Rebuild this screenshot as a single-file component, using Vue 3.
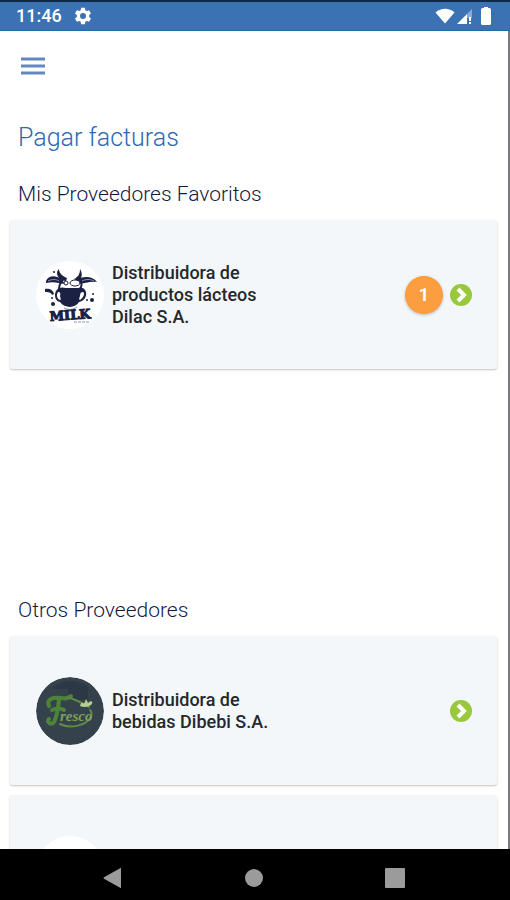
<template>
  <div class="screen">
    <header class="status-bar">
      <span class="clock">11:46</span>
      <svg class="status-gear" width="18" height="18" viewBox="0 0 24 24" aria-hidden="true">
        <path fill="#fff" fill-rule="evenodd" d="M9.500 1h5l.6 3.200 2 1.100 3-1.100 2.600 4.400-2.500 2.200v2.400l2.500 2.200-2.600 4.400-3-1.100-2 1.100-.6 3.200h-5l-.6-3.200-2-1.100-3 1.100-2.600-4.400 2.500-2.200v-2.400L1.300 8.600 3.900 4.200l3 1.100 2-1.100zM12 8a4 4 0 1 0 0 8 4 4 0 0 0 0-8z" />
      </svg>
      <div class="status-icons">
        <svg width="20" height="16" viewBox="0 0 20 16" aria-hidden="true">
          <path fill="#fff" d="M0.500 4.500C6-.5 14-.5 19.500 4.500L10 15.500z" />
        </svg>
        <svg width="16" height="16" viewBox="0 0 16 16" aria-hidden="true">
          <path fill="#fff" fill-opacity=".4" d="M15 1v9h-5v-4z" />
          <path fill="#fff" d="M0 16L10 6v10zM12 9h2v4h-2zM12 14h2v2h-2z" />
        </svg>
        <svg class="battery" width="10" height="18" viewBox="0 0 10 18" aria-hidden="true">
          <path fill="#fff" d="M3 0h4v1h1.500Q10 1 10 3v13.500Q10 18 8.500 18h-7Q0 18 0 16.500V3Q0 1 1.500 1H3z" />
        </svg>
      </div>
    </header>

    <main class="content">
      <button class="menu-btn" type="button" aria-label="Menú">
        <svg width="24" height="18" viewBox="0 0 24 18" aria-hidden="true">
          <path stroke="#6288bf" stroke-width="3" d="M0 2h24M0 9h24M0 16h24" />
        </svg>
      </button>

      <h1 class="title">Pagar facturas</h1>

      <section v-for="group in groups" :key="group.title" class="group">
        <h2 class="group-title">{{ group.title }}</h2>
        <div class="cards">
          <a v-for="p in group.providers" :key="p.id" class="card" href="#">
            <span class="avatar">
              <svg v-if="p.logo === 'milk'" width="68" height="68" viewBox="0 0 68 68" aria-hidden="true">
                <!-- horns and ears -->
                <g fill="#1b2142">
                  <path d="M23 8c0 4 3 7 8 9l-1 3c-5 0-9-4-9-8 0-2 1-3 2-4zM44 8c3 5 2 10-2 12l-4-2c4-2 6-5 6-10z" />
                  <path d="M10 20c2-6 10-6 15-2 2 2 3 4 4 5-6-1-12-3-19-1zM39 21c5-6 17-7 22 0-7-1-12 2-20 2z" />
                </g>
                <path d="M12 20c4-2 8-2 11 0M46 20c4-2 8-2 12 0" fill="none" stroke="#8d94aa" />
                <!-- face -->
                <path d="M27 19c-3 3-4 6-4 9M45 20c1 3 1 5-1 8" fill="none" stroke="#1b2142" stroke-width="2" />
                <ellipse cx="39" cy="22" rx="5" ry="3" fill="#fff" stroke="#1b2142" />
                <circle cx="30" cy="22" r="2" fill="#fff" stroke="#1b2142" />
                <!-- muzzle -->
                <path fill="#1b2142" d="M20 30c2-4 6-4 10-3h12c4-1 7 0 8 4 1 5-2 9-7 10-3 6-14 7-19 0-5-1-6-7-4-11z" />
                <path fill="#fff" d="M22 31c2 0 3 1 2 4 1 3 1 4 0 4-3-1-4-5-2-8zM47 31c2 1 1 5-3 8-1 0-1-2 0-4 0-3 1-4 3-4z" />
                <path d="M28 47c4 2 9 2 13-1" fill="none" stroke="#858ba1" />
                <!-- splashes -->
                <g fill="#1b2142">
                  <path d="M9 28c5-1 8 1 9 5l-2 1c-1-3-4-3-7-3z" />
                  <circle cx="18" cy="11" r="1" />
                  <circle cx="16" cy="37" r="1" />
                  <circle cx="17" cy="43" r="2" />
                  <circle cx="57" cy="33" r="1" />
                  <circle cx="56" cy="39" r="2" />
                  <circle cx="51" cy="39" r="1" />
                </g>
                <text x="14" y="60" class="milk-text" transform="rotate(-4 14 60)">MILK</text>
                <path d="M38 61h16" stroke="#8f94a4" stroke-dasharray="3 1" />
              </svg>
              <svg v-else-if="p.logo === 'fresco'" width="68" height="68" viewBox="0 0 68 68" aria-hidden="true">
                <circle cx="34" cy="34" r="34" fill="#35424c" />
                <path d="M16 12h16v11h20V10C40 0 22 4 16 12z" fill="#2c3845" />
                <g fill="none" stroke="#4d8538" stroke-linecap="round">
                  <path d="M13 29c-3-7 4-9 12-8 5 1 8 0 10-2M23 23c-1 9-2 17-5 22-3 4-8 0-5-3M16 33c5-2 9-2 12 0" stroke-width="4" />
                  <path d="M34 21c7 2 12 5 19 9M24 47c10 5 25 2 30-6 2-3 2-6 0-8" stroke="#5e8a45" stroke-width="2" />
                </g>
                <text x="24" y="44" class="fresco-text">resco</text>
                <path d="M44 29c1-4 3-4 4-2l2-5 2 4c3-3 5-2 4 1-3 3-8 4-12 2z" fill="#b5cf91" />
              </svg>
            </span>
            <span class="name">{{ p.name }}</span>
            <span v-if="p.pending" class="badge">{{ p.pending }}</span>
            <svg v-if="p.name" class="go" width="22" height="22" viewBox="0 0 22 22" aria-hidden="true">
              <circle cx="11" cy="11" r="11" fill="#98c83c" />
              <path d="M8 5l6 6-6 6" fill="none" stroke="#fff" stroke-width="4" />
            </svg>
          </a>
        </div>
      </section>
    </main>

    <nav class="nav-bar">
      <button type="button" aria-label="Atrás">
        <svg width="20" height="22" viewBox="0 0 20 22" aria-hidden="true">
          <path fill="#9b9b9b" d="M18 .8v20.400L1 11.800q-1-.8 0-1.600z" />
        </svg>
      </button>
      <button type="button" aria-label="Inicio">
        <svg width="20" height="20" viewBox="0 0 20 20" aria-hidden="true">
          <circle cx="10" cy="10" r="9" fill="#9b9b9b" />
        </svg>
      </button>
      <button type="button" aria-label="Recientes">
        <svg width="20" height="20" viewBox="0 0 20 20" aria-hidden="true">
          <rect width="20" height="20" rx="1" fill="#9b9b9b" />
        </svg>
      </button>
    </nav>
  </div>
</template>

<script setup>
const groups = [
  {
    title: 'Mis Proveedores Favoritos',
    providers: [
      { id: 1, name: 'Distribuidora de productos lácteos Dilac S.A.', logo: 'milk', pending: 1 },
    ],
  },
  {
    title: 'Otros Proveedores',
    providers: [
      { id: 2, name: 'Distribuidora de bebidas Dibebi S.A.', logo: 'fresco' },
      { id: 3, name: '', logo: '' },
    ],
  },
];
</script>

<style>
body {
  margin: 0;
}
</style>

<style scoped>
.screen {
  display: flex;
  flex-direction: column;
  height: 100vh;
  background: #fff;
  font-family: Roboto, sans-serif;
}

.status-bar {
  display: flex;
  align-items: center;
  box-sizing: border-box;
  height: 31px;
  flex-shrink: 0;
  padding: 0 19px 0 16px;
  background: #3b72b3;
  border-top: 2px solid #102b4a;
  border-bottom: 1px solid #2468a8;
  color: #fff;
}
.clock {
  font-size: 18px;
  font-weight: 500;
  line-height: 28px;
}
.status-gear {
  margin-left: 12px;
}
.status-icons {
  display: flex;
  align-items: center;
  gap: 2px;
  margin-left: auto;
}
.battery {
  margin-left: 6px;
}

.content {
  flex: 1;
  min-height: 0;
  overflow: hidden;
  padding: 16px 11px 0 10px;
  border-right: 2px solid #77797c;
}

.menu-btn {
  display: flex;
  padding: 10px 11px;
  border: 0;
  background: none;
}

.title {
  margin: 37px 8px 0;
  font-size: 25px;
  font-weight: 300;
  line-height: 32px;
  color: #2f68b0;
}

.group {
  min-height: 392px;
  margin-top: 24px;
}
.group-title {
  margin: 0 8px;
  font-size: 21px;
  font-weight: 300;
  line-height: 32px;
  color: #14183f;
}
.cards {
  display: flex;
  flex-direction: column;
  gap: 10px;
  margin-top: 10px;
}

.card {
  display: flex;
  align-items: center;
  box-sizing: border-box;
  min-height: 149px;
  padding: 0 25px 0 26px;
  border-radius: 3px;
  background: #f3f7fa;
  box-shadow: 0 1px 2px rgba(0, 0, 0, 0.24);
  color: #25282b;
  text-decoration: none;
}
.avatar {
  width: 68px;
  height: 68px;
  flex-shrink: 0;
  overflow: hidden;
  border-radius: 50%;
  background: #fff;
}
.avatar svg {
  display: block;
}
.milk-text {
  font-family: "DejaVu Serif", serif;
  font-size: 13px;
  font-weight: 700;
  fill: #1b2142;
  stroke: #1b2142;
}
.fresco-text {
  font-family: "Liberation Serif", serif;
  font-size: 15px;
  font-style: italic;
  font-weight: 700;
  fill: #7ba354;
}
.name {
  max-width: 180px;
  margin: 0 auto 0 8px;
  font-size: 18px;
  font-weight: 500;
  line-height: 22px;
}
.badge {
  width: 38px;
  height: 38px;
  margin-right: 7px;
  border-radius: 50%;
  background: #fc9d40;
  box-shadow: 0 1px 3px rgba(0, 0, 0, 0.25);
  color: #fff;
  font-size: 18px;
  font-weight: 700;
  line-height: 38px;
  text-align: center;
}
.go {
  flex-shrink: 0;
}

.nav-bar {
  display: flex;
  align-items: center;
  justify-content: space-evenly;
  height: 51px;
  flex-shrink: 0;
  padding: 6px 2px 0 0;
  box-sizing: border-box;
  background: #000;
}
.nav-bar button {
  display: flex;
  justify-content: center;
  width: 56px;
  padding: 8px;
  border: 0;
  background: none;
}
</style>
